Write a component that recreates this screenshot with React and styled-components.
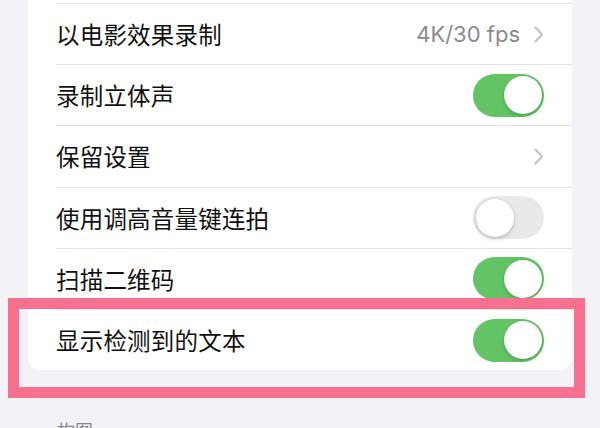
import React from "react";
import styled, { createGlobalStyle } from "styled-components";

const GlobalStyle = createGlobalStyle`
  html, body {
    margin: 0;
    padding: 0;
    background: #f2f2f7;
    overflow: hidden;
  }
  body {
    font-family: "Inter", "Noto Sans CJK SC", sans-serif;
    -webkit-font-smoothing: antialiased;
  }
`;

const rows = [
  { label: "以电影效果录制", value: "4K/30 fps", type: "link" },
  { label: "录制立体声", type: "toggle", on: true },
  { label: "保留设置", type: "link" },
  { label: "使用调高音量键连拍", type: "toggle", on: false },
  { label: "扫描二维码", type: "toggle", on: true },
  { label: "显示检测到的文本", type: "toggle", on: true, highlight: true },
];

const Page = styled.div`
  width: 600px;
  height: 428px;
  overflow: hidden;
`;

// the list is scrolled: only the last 3px of the row above are in view
const Card = styled.div`
  margin: 0 28px;
  padding-top: 3px;
  background: #ffffff;
  border-radius: 0 0 12px 12px;
`;

const Row = styled.div`
  position: relative;
  height: 61.2px;
  margin-left: 28px;
  padding-right: 28px;
  display: flex;
  align-items: center;
  justify-content: space-between;
  border-top: 1px solid #e2e2e5;
  box-sizing: border-box;
`;

const Label = styled.span`
  font-family: "Noto Sans CJK SC", sans-serif;
  font-size: 23.5px;
  color: #111111;
  letter-spacing: 0.2px;
`;

const Trail = styled.div`
  display: flex;
  align-items: center;
  gap: 14px;
`;

const Value = styled.span`
  font-family: "Inter", "Noto Sans CJK SC", sans-serif;
  font-size: 22px;
  color: #8a8a8e;
`;

const Chevron = () => (
  <svg width="10" height="17" viewBox="0 0 10 17" fill="none">
    <path
      d="M1.5 1.5 L8 8.5 L1.5 15.5"
      stroke="#c4c4c7"
      strokeWidth="2.2"
      strokeLinecap="round"
      strokeLinejoin="round"
    />
  </svg>
);

const Track = styled.div`
  width: 71px;
  height: 43px;
  border-radius: 22px;
  background: ${(p) => (p.$on ? "#63c466" : "#e9e9eb")};
  display: flex;
  align-items: center;
  justify-content: ${(p) => (p.$on ? "flex-end" : "flex-start")};
  padding: 0 2.5px;
  box-sizing: border-box;
`;

const Knob = styled.div`
  width: 38px;
  height: 38px;
  border-radius: 50%;
  background: #ffffff;
  box-shadow: 0 2px 5px rgba(0, 0, 0, 0.18), 0 0 0 0.5px rgba(0, 0, 0, 0.06);
`;

const Highlight = styled.div`
  position: absolute;
  top: -12px;
  left: -48px;
  right: -13px;
  bottom: -28px;
  border: 11px solid #f7708f;
  pointer-events: none;
`;

const SectionHeader = styled.div`
  padding: 47px 0 0 57px;
  font-family: "Noto Sans CJK SC", sans-serif;
  font-size: 18px;
  color: #8a8a8e;
`;

function Toggle({ on }) {
  return (
    <Track $on={on}>
      <Knob />
    </Track>
  );
}

export default function App() {
  return (
    <Page>
      <GlobalStyle />
      <Card>
        {rows.map((r) => (
          <Row key={r.label}>
            <Label>{r.label}</Label>
            <Trail>
              {r.value && <Value>{r.value}</Value>}
              {r.type === "link" ? <Chevron /> : <Toggle on={r.on} />}
            </Trail>
            {r.highlight && <Highlight />}
          </Row>
        ))}
      </Card>
      <SectionHeader>构图</SectionHeader>
    </Page>
  );
}
